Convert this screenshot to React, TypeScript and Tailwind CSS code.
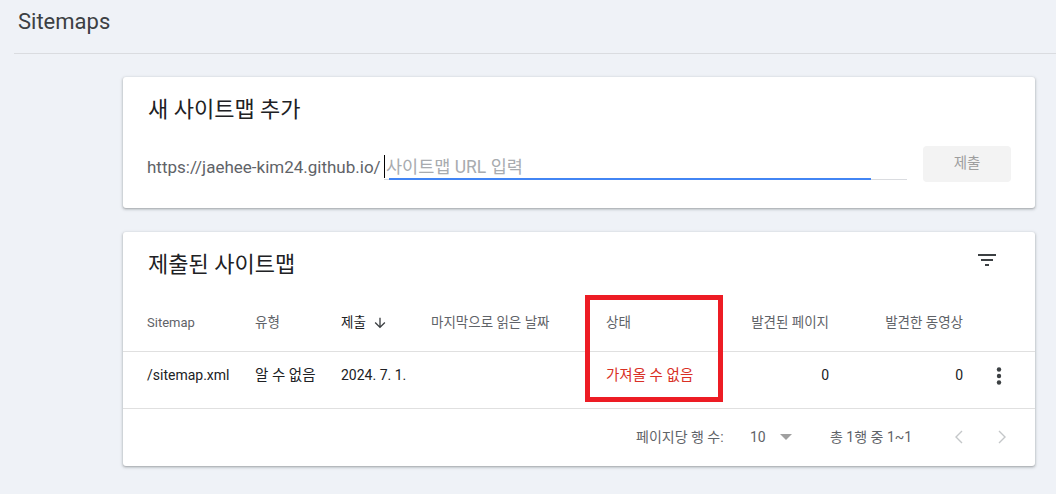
import React from "react";

const font = "font-['Roboto','Noto_Sans_CJK_KR',sans-serif]";

function FilterIcon() {
  return (
    <svg width="24" height="24" viewBox="0 0 24 24" fill="#3c4043">
      <path d="M10 18h4v-2h-4v2zM3 6v2h18V6H3zm3 7h12v-2H6v2z" />
    </svg>
  );
}

function ArrowDown() {
  return (
    <svg width="16" height="16" viewBox="0 0 24 24" fill="#3c4043">
      <path d="M20 12l-1.41-1.41L13 16.17V4h-2v12.17l-5.58-5.59L4 12l8 8 8-8z" />
    </svg>
  );
}

function MoreVert() {
  return (
    <svg width="24" height="24" viewBox="0 0 24 24" fill="#3c4043">
      <circle cx="12" cy="5.5" r="2.2" />
      <circle cx="12" cy="12" r="2.2" />
      <circle cx="12" cy="18.5" r="2.2" />
    </svg>
  );
}

function Chevron({ dir }: { dir: "left" | "right" }) {
  return (
    <svg width="24" height="24" viewBox="0 0 24 24" fill="none" stroke="#c4c7c9" strokeWidth="1.4">
      {dir === "left" ? <polyline points="15,6 9,12 15,18" /> : <polyline points="9,6 15,12 9,18" />}
    </svg>
  );
}

export default function App() {
  return (
    <div className={`${font} w-[1056px] h-[494px] bg-[#eff2f7] overflow-hidden`}>
      <div className="ml-[14px] h-[54px] border-b border-[#dadce0] pl-[4px] pt-[8px]">
        <div className="text-[22px] leading-[28px] text-[#3c4043]">Sitemaps</div>
      </div>

      <div className="ml-[123px] w-[912px] mt-[23px] flex flex-col gap-[24px]">
        {/* Card 1 */}
        <div className="bg-white rounded-[3px] shadow-[0_1px_2px_0_rgba(60,64,67,0.3),0_1px_3px_1px_rgba(60,64,67,0.15)] h-[131px]">
          <div className="h-[62px] flex items-center pl-[25px] pt-[3px] text-[22px] text-[#202124]">새 사이트맵 추가</div>
          <div className="h-[50px] flex items-center pl-[24px] pr-[24px]">
            <div className="flex-1 h-[32px] flex items-end self-start mt-[9px]">
              <span className="text-[17px] leading-[24px] text-[#5f6368] mb-[1px] whitespace-nowrap">https://jaehee-kim24.github.io/</span>
            </div>
            <div className="w-[523px] h-[32px] self-start mt-[9px] border-b border-[#dadce0] relative flex items-end">
              <div className="w-px h-[23px] bg-black mb-[1px]" />
              <span className="ml-[1px] text-[17.5px] leading-[24px] text-[#a8abaf] whitespace-nowrap">사이트맵 URL 입력</span>
              <div className="absolute left-[5px] bottom-[-1px] w-[482px] h-[2px] bg-[#4285f4]" />
            </div>
            <div className="ml-[16px] w-[88px] h-[36px] rounded-[4px] bg-[#f3f3f3] flex items-center justify-center text-[14.5px] text-[#9e9e9e] self-start mt-[7px]">
              제출
            </div>
          </div>
        </div>

        {/* Card 2 */}
        <div className="relative bg-white rounded-[3px] shadow-[0_1px_2px_0_rgba(60,64,67,0.3),0_1px_3px_1px_rgba(60,64,67,0.15)] h-[234px]">
          <div className="h-[62px] flex items-center pl-[25px] pr-[36px] justify-between">
            <span className="text-[22px] text-[#202124] mt-[2px]">제출된 사이트맵</span>
            <span className="mb-[6px]"><FilterIcon /></span>
          </div>
          <div className="h-[58px] border-b border-[#e0e0e0] flex items-center pl-[24px] text-[13.5px] text-[#5f6368] whitespace-nowrap">
            <div className="w-[108px] text-[13px]">Sitemap</div>
            <div className="w-[86px]">유형</div>
            <div className="w-[90px] flex items-center text-[#202124]">
              <span>제출</span>
              <span className="ml-[6px]"><ArrowDown /></span>
            </div>
            <div className="w-[175px]">마지막으로 읽은 날짜</div>
            <div className="w-[123px]">상태</div>
            <div className="w-[100px] flex justify-end">발견된 페이지</div>
            <div className="w-[134px] flex justify-end">발견한 동영상</div>
            <div className="w-[72px]" />
          </div>
          <div className="h-[57px] border-b border-[#e0e0e0] flex items-center pl-[24px] pb-[9px] text-[14px] text-[#202124] whitespace-nowrap">
            <div className="w-[108px]">/sitemap.xml</div>
            <div className="w-[86px] text-[14.5px]">알 수 없음</div>
            <div className="w-[90px]">2024. 7. 1.</div>
            <div className="w-[175px]" />
            <div className="w-[123px] text-[14.5px] text-[#d93025]">가져올 수 없음</div>
            <div className="w-[100px] text-right">0</div>
            <div className="w-[134px] text-right">0</div>
            <div className="w-[72px] flex justify-center"><MoreVert /></div>
          </div>
          <div className="h-[56px] flex items-center pl-[513px] text-[14px] text-[#5f6368] whitespace-nowrap">
            <div className="w-[114px]">페이지당 행 수:</div>
            <div className="w-[30px] text-[14px]">10</div>
            <div className="w-[12px] flex items-center">
              <svg width="12" height="6" viewBox="0 0 12 6"><polygon points="0,0 12,0 6,6" fill="#a0a0a0" /></svg>
            </div>
            <div className="ml-[38px] w-[112px]">총 1행 중 1~1</div>
            <div className="w-[34px] flex justify-center"><Chevron dir="left" /></div>
            <div className="ml-[9px] w-[34px] flex justify-center"><Chevron dir="right" /></div>
          </div>

          <div className="absolute left-[462px] top-[63px] w-[138px] h-[107px] border-[5px] border-[#ed1c24]" />
        </div>
      </div>
    </div>
  );
}
